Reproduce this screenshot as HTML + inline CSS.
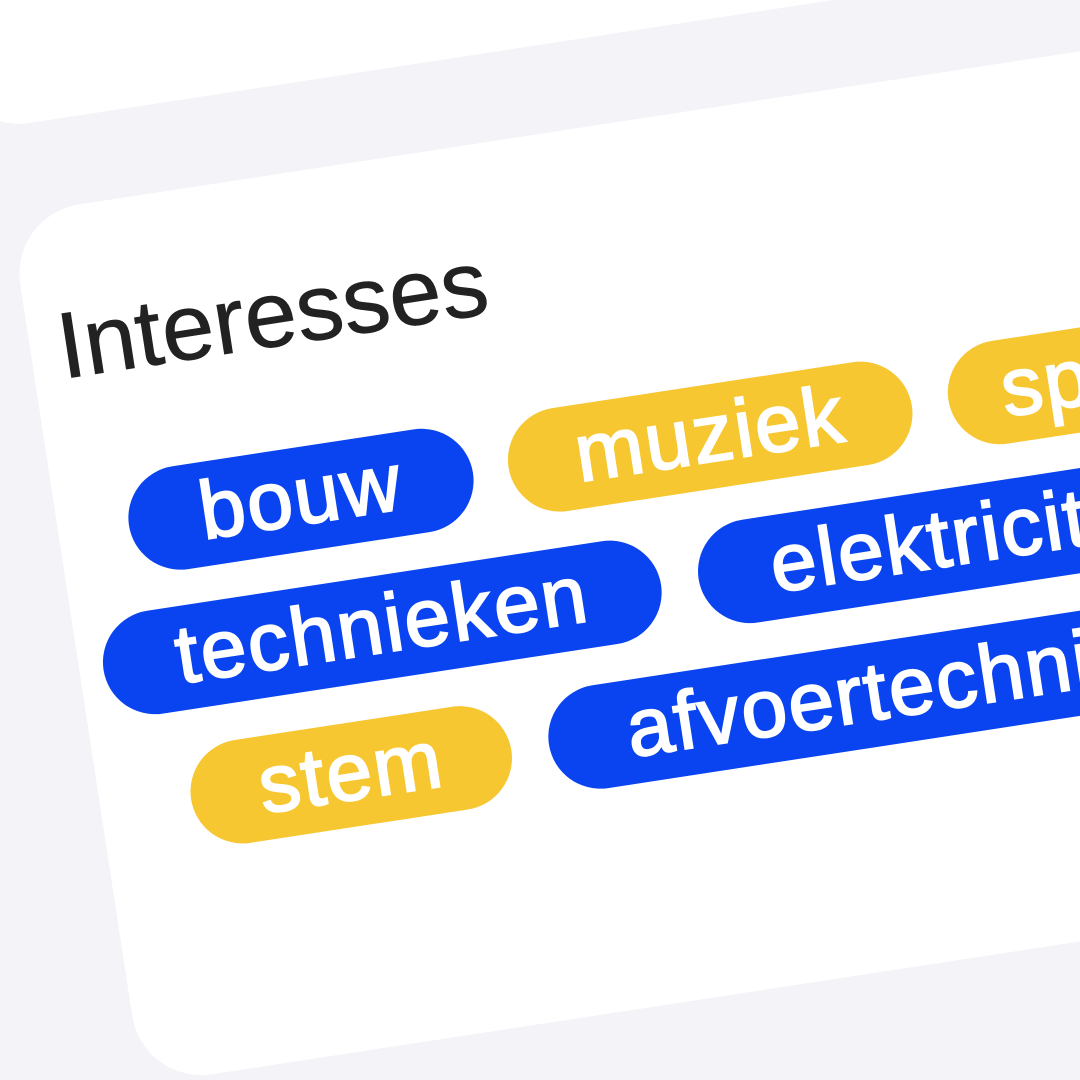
<!DOCTYPE html>
<html><head><meta charset="utf-8"><style>
html,body{margin:0;padding:0;width:1080px;height:1080px;overflow:hidden;background:#f3f3f8;}
#root{position:relative;width:1080px;height:1080px;overflow:hidden;}
#w{position:absolute;left:0;top:0;width:1300px;height:1200px;transform:rotate(-8.7deg);transform-origin:0 0;}
.card{position:absolute;background:#fff;border-radius:70px;}
.t{position:absolute;font-family:"Liberation Sans",sans-serif;color:#222;font-size:94px;line-height:1;-webkit-text-stroke:0.6px #222;}
.p{position:absolute;height:104px;border-radius:52px;font-family:"Liberation Sans",sans-serif;font-size:82px;line-height:100px;color:#fff;text-align:center;letter-spacing:2px;white-space:nowrap;overflow:hidden;-webkit-text-stroke:2px #fff;}
.b{background:#0a44f0;}
.y{background:#f6c731;}
</style></head><body>
<div id="root">
<div id="w">
<div class="card" style="left:-60px;top:-400px;width:1350px;height:526px;"></div>
<div class="card" style="left:-23px;top:214px;width:1350px;height:880px;"></div>
<div class="t" style="left:5px;top:305px;">Interesses</div>
<div class="p b" style="left:48px;top:487px;width:348px;">bouw</div>
<div class="p y" style="left:432px;top:487px;width:408px;">muziek</div>
<div class="p y" style="left:877px;top:487px;width:300px;">sport</div>
<div class="p b" style="left:1px;top:626px;width:564px;">technieken</div>
<div class="p b" style="left:603px;top:626px;width:560px;">elektriciteit</div>
<div class="p y" style="left:68px;top:767px;width:324px;">stem</div>
<div class="p b" style="left:430px;top:767px;width:720px;">afvoertechniek</div>
</div>
</div>
</body></html>
